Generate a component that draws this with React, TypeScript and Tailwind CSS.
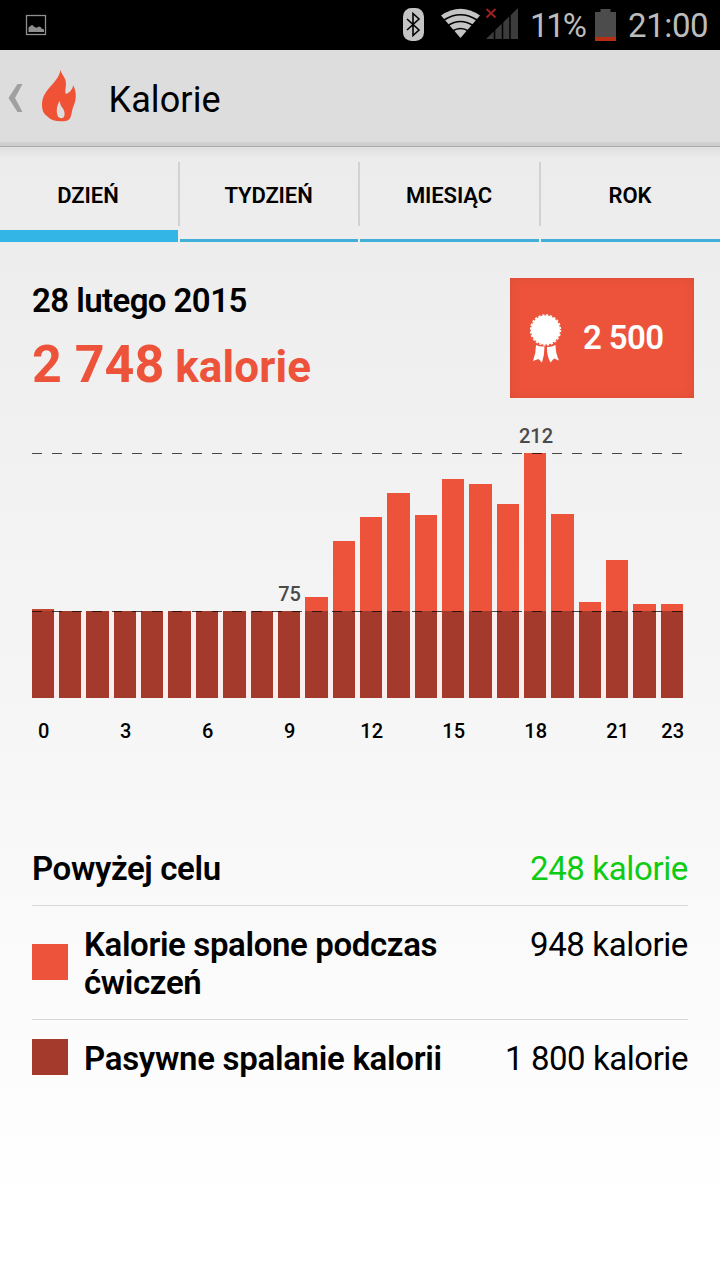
import React from 'react';

const tops = [609, 611, 611, 611, 611, 611, 611, 611, 611, 611, 597, 541, 517, 493, 515, 479, 484, 504, 453, 514, 602, 560, 604, 604];
const hours = [0, 3, 6, 9, 12, 15, 18, 21, 23];
const ORIGIN = 420;
const barX = (i: number) => Math.floor(32.2 + i * 27.35);
const barWidth = (i: number) => (i === 23 ? 22 : barX(i + 1) - barX(i) - 5);

function StatusBar() {
  return (
    <header className="flex h-[50px] shrink-0 items-center bg-black text-[#bcbcbc]">
      <svg className="ml-[25px]" width="22" height="22" viewBox="0 0 22 22">
        <rect x="1.500" y="1.500" width="19" height="19" fill="none" stroke="#8f8f8f" strokeWidth="1.300" />
        <path d="M3.500 18v-4.500l3-2.300q1.500-.5 2.500 1.600l2.500 1l2.500-1.300q2 .2 2.500 2l2.500 1v2.500z" fill="#8f8f8f" />
      </svg>
      <svg className="ml-auto mr-[12px] shrink-0" width="118" height="50" viewBox="0 0 118 50">
        <rect x="3" y="8" width="21" height="33" rx="8.500" fill="#c4c4c4" />
        <path d="M7 19L19 30L13 35.500V13.500L19 19L7 30" fill="none" stroke="#000" strokeWidth="1.600" />
        <path d="M60.500 38L41 15.500Q60.500 2 80 15.500z" fill="#c4c4c4" />
        <path d="M44 20q16.500-10.500 33 0M48 25.500q12.500-8 25 0M52.500 31q8-5 16 0" fill="none" stroke="#000" strokeWidth="1.600" />
        <path d="M86.500 9l9 8.500m0-8.500l-9 8.500" stroke="#9c2022" strokeWidth="2" />
        <path d="M86 39L118 8V39z" fill="#3c3c3c" />
        <path d="M94.500 26v14M102.500 20v20M110 12v28" stroke="#000" strokeWidth="1.500" />
      </svg>
      <span className="mt-[2px] w-[56px] whitespace-nowrap text-[33px] tracking-[-2.200px]">11%</span>
      <svg className="ml-[9px] shrink-0" width="21" height="32" viewBox="0 0 21 32">
        <path d="M0 3h5.500V0h10v3H21v29H0z" fill="#4c4c4c" />
        <path d="M0 28h21v4H0z" fill="#b82e12" />
      </svg>
      <span className="ml-[12px] mr-[12px] mt-[2px] w-[80px] whitespace-nowrap text-[33px] tracking-[-0.400px]">21:00</span>
    </header>
  );
}

function TitleBar() {
  return (
    <div className="flex h-[97px] shrink-0 items-center border-b border-[#aaa] bg-linear-to-b from-[#dddddd] from-[95%] to-[#cdcdcd] to-[97%]">
      <svg width="95" height="96" viewBox="0 0 95 96">
        <path d="M17.500 34h5l-7.500 14l7.500 14h-5l-9-14z" fill="#a0a0a0" />
        <path fillRule="evenodd" d="M60.500 20C58 34 43 38 42 54C41.800 61 44 64 47.500 66.500C51.500 71 58 72 66 71C72 70 71 63 73 57.500C76 51 77.500 43 73 35C73 39.500 69 43 66 44C64 41.500 67.500 34 65 29C64 26 61.500 24 60.500 20zM59.500 51C56.500 56 56 62 58 66.500C60 69 64 69 64.500 65C65 60 62.500 58 61 56Z" fill="#f05235" />
      </svg>
      <h1 className="ml-[13.500px] mt-[3px] text-[36px] leading-none tracking-[0.100px] text-black">Kalorie</h1>
    </div>
  );
}

function Tabs() {
  return (
    <nav className="grid h-[95px] shrink-0 grid-cols-[178px_180px_181px_181px] bg-linear-to-b from-[#d7d7d7]/60 to-transparent to-[12%] text-[22px] font-semibold">
      <div className="flex flex-col justify-between">
        <div className="flex h-[83px] items-center justify-center pb-1 pr-[2px] pt-[17px]">DZIEŃ</div>
        <div className="h-3 bg-[#33b5e5]" />
      </div>
      {['TYDZIEŃ', 'MIESIĄC', 'ROK'].map((name) => (
        <div key={name} className="flex flex-col justify-between">
          <div className="mt-[15px] flex h-[64px] items-center justify-center border-l-2 border-[#d2d2d2] pr-px pt-[3px] tracking-[-0.100px]">{name}</div>
          <div className="ml-[2px] h-[3px] bg-[#42afd9]" />
        </div>
      ))}
    </nav>
  );
}

function Chart() {
  return (
    <svg className="shrink-0" width="720" height="330" viewBox="0 0 720 330">
      {tops.map((top, i) => (
        <g key={i}>
          <rect x={barX(i)} y={top - ORIGIN} width={barWidth(i)} height={611 - top} fill={i === 0 ? '#c44731' : '#ed533b'} />
          <rect x={barX(i)} y="191" width={barWidth(i)} height="87" fill="#a33a2c" />
          {i < 23 && <rect x={barX(i) + barWidth(i)} y="192" width="5" height="86" fill="#fbeeec" />}
        </g>
      ))}
      <path d="M32 33.500H683M32 191.500H683" stroke="#000" strokeOpacity=".7" strokeWidth="1.200" strokeDasharray="10 10" />
      <g fontSize="20" textAnchor="middle" fontWeight="500">
        <text x="289.500" y="181" fill="#4a4a4a">75</text>
        <text x="536" y="23" fill="#4a4a4a">212</text>
        {hours.map((hour) => (
          <text key={hour} x={barX(hour) + 11.700} y="318">{hour}</text>
        ))}
      </g>
    </svg>
  );
}

export default function App() {
  return (
    <div className="flex h-[1280px] w-[720px] flex-col overflow-hidden bg-linear-to-b from-[#e9e9e9] to-[#ffffff] to-[95%] font-['Roboto',sans-serif] text-black">
      <StatusBar />
      <TitleBar />
      <Tabs />
      <section className="flex h-[178px] shrink-0 items-start justify-between pl-8 pr-[26px] pt-9">
        <div className="flex flex-col">
          <h2 className="mt-[6px] whitespace-nowrap text-[33px] font-semibold leading-[34px] tracking-[-0.580px]">28 lutego 2015</h2>
          <p className="mt-[15px] whitespace-nowrap text-[52px] font-bold leading-[64px] text-[#ed533b]">2 748<span className="ml-[11px] text-[44px] tracking-[0.100px]">kalorie</span></p>
        </div>
        <div className="flex h-[120px] w-[184px] items-center bg-[#ed533b] pl-5 text-white shadow-[inset_0_0_10px_#d94b36]">
          <svg className="shrink-0" width="32" height="50" viewBox="0 0 32 50">
            <circle cx="15.500" cy="17" r="14.500" fill="#fff" />
            <circle cx="15.500" cy="17" r="15" fill="none" stroke="#fff" strokeWidth="1.500" strokeDasharray="2.300 1.630" />
            <path d="M6 32q4 2 8.500 1.500q0 8-2.500 16l-3.500-3.500l-5.500 2q3-8 3-16zM17 34q4 .5 8.500-2q0 8 3.500 15.500l-5-2l-3.500 4q-4-7-3.500-15.500z" fill="#fff" />
          </svg>
          <span className="ml-[21px] whitespace-nowrap text-[33px] font-semibold tracking-[-0.600px]">2 500</span>
        </div>
      </section>
      <Chart />
      <section className="mx-8 flex flex-col pt-[82px] text-[33px] leading-[38px] tracking-[-0.370px]">
        <div className="flex h-[74px] justify-between border-b border-[#d4d7d7] pt-[18px]">
          <strong className="font-semibold">Powyżej celu</strong>
          <span className="text-[#0ecb13]">248 kalorie</span>
        </div>
        <div className="flex h-[114px] border-b border-[#d4d7d7] pt-[20px]">
          <span className="mr-4 mt-[18px] h-9 w-9 shrink-0 bg-[#ed533b]" />
          <strong className="w-[370px] font-semibold">Kalorie spalone podczas ćwiczeń</strong>
          <span className="ml-auto whitespace-nowrap">948 kalorie</span>
        </div>
        <div className="flex pt-[20px]">
          <span className="mr-4 mt-[-1px] h-9 w-9 shrink-0 bg-[#a33a2c]" />
          <strong className="whitespace-nowrap font-semibold tracking-[-0.290px]">Pasywne spalanie kalorii</strong>
          <span className="ml-auto whitespace-nowrap tracking-[-0.450px]">1 800 kalorie</span>
        </div>
      </section>
    </div>
  );
}
